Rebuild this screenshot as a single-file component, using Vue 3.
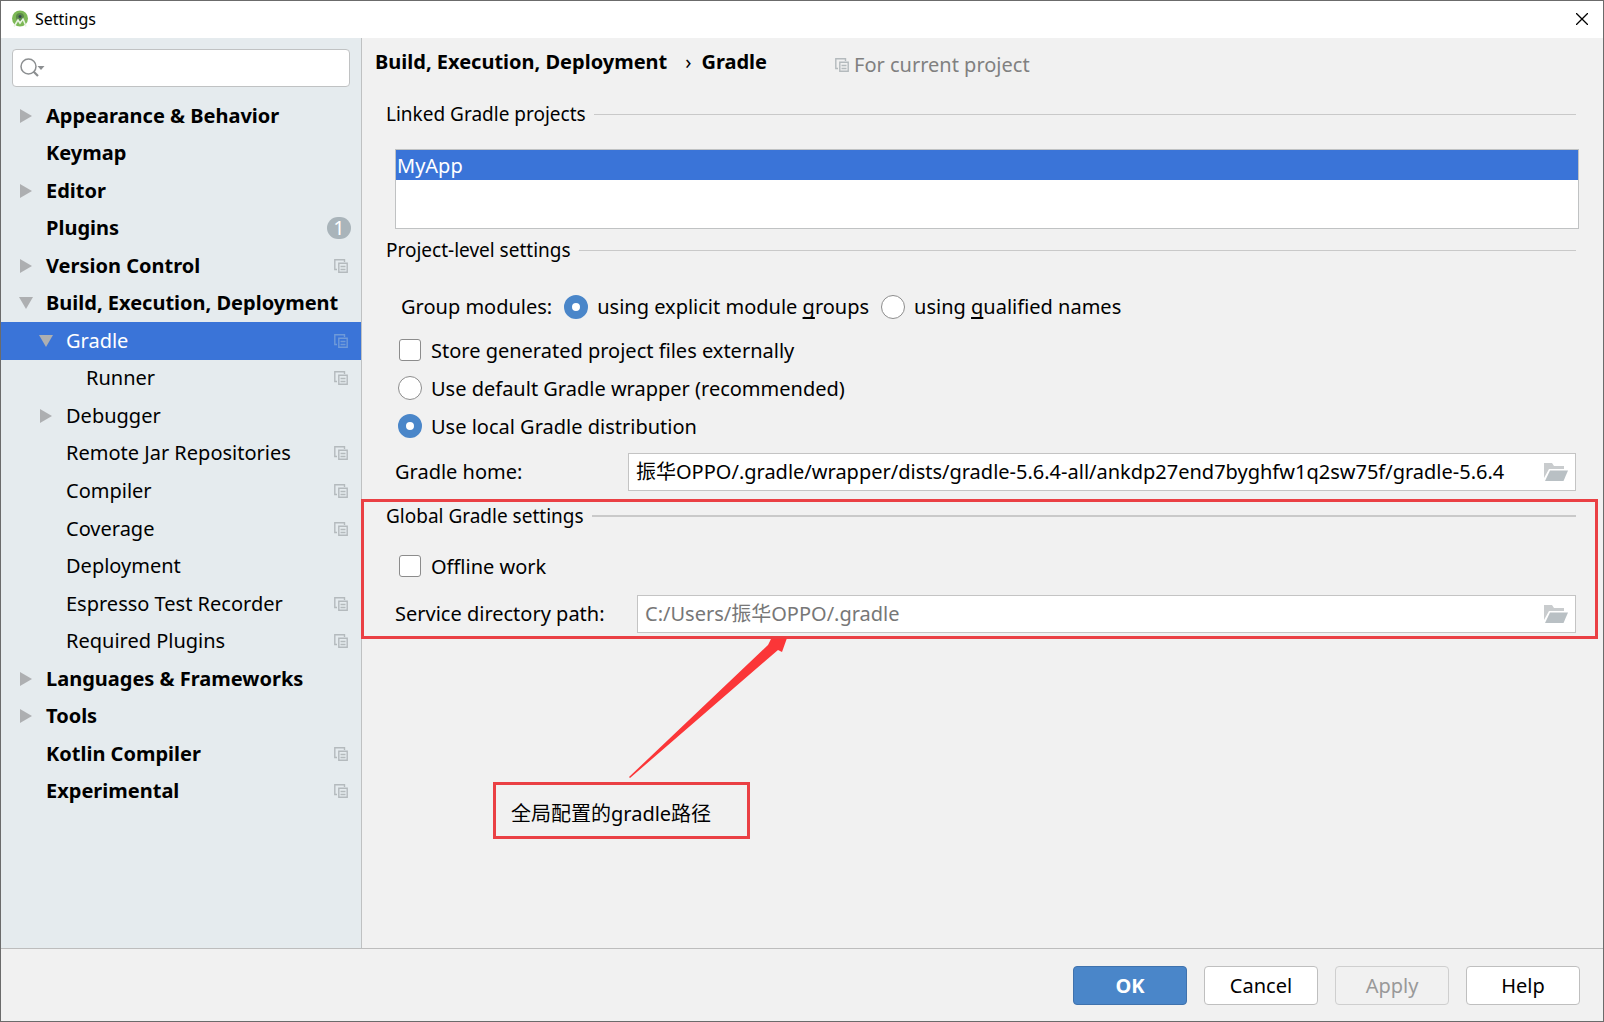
<script setup>
import { ref } from 'vue'

const tree = [
  { label: 'Appearance & Behavior', level: 0, arrow: 'right' },
  { label: 'Keymap', level: 0 },
  { label: 'Editor', level: 0, arrow: 'right' },
  { label: 'Plugins', level: 0, badge: 1 },
  { label: 'Version Control', level: 0, arrow: 'right', copy: true },
  { label: 'Build, Execution, Deployment', level: 0, arrow: 'down' },
  { label: 'Gradle', level: 1, arrow: 'down', copy: true },
  { label: 'Runner', level: 2, copy: true },
  { label: 'Debugger', level: 1, arrow: 'right' },
  { label: 'Remote Jar Repositories', level: 1, copy: true },
  { label: 'Compiler', level: 1, copy: true },
  { label: 'Coverage', level: 1, copy: true },
  { label: 'Deployment', level: 1 },
  { label: 'Espresso Test Recorder', level: 1, copy: true },
  { label: 'Required Plugins', level: 1, copy: true },
  { label: 'Languages & Frameworks', level: 0, arrow: 'right' },
  { label: 'Tools', level: 0, arrow: 'right' },
  { label: 'Kotlin Compiler', level: 0, copy: true },
  { label: 'Experimental', level: 0, copy: true }
]

const selected = ref('Gradle')
const search = ref('')
const grouping = ref('explicit')
const distribution = ref('local')
const storeExternally = ref(false)
const offline = ref(false)
const gradleHome = ref('振华OPPO/.gradle/wrapper/dists/gradle-5.6.4-all/ankdp27end7byghfw1q2sw75f/gradle-5.6.4')
const servicePath = ref('')
</script>

<template>
  <div class="window">
    <svg class="defs" aria-hidden="true">
      <symbol id="copy" viewBox="0 0 14 14">
        <path d="M3 10.5H.8V.8h9.700V3M4.800 4.300h8.400v8.900H4.800zM6.500 7.500h5M6.500 10.500h5" fill="none" stroke="currentColor" stroke-width="1.400" />
      </symbol>
      <symbol id="folder" viewBox="0 0 24 18">
        <path d="M0 0h8l2 3h10v3H5L0 15z" fill="#c9ccce" />
        <path d="M6 7.500h18L19.500 18H1z" fill="#b9c0c4" />
      </symbol>
    </svg>

    <header class="titlebar">
      <svg class="logo" viewBox="0 0 18 18" aria-hidden="true">
        <circle cx="9" cy="8.500" r="8" fill="#7cb855" />
        <circle cx="9" cy="7" r="4" fill="#5b8a49" />
        <circle cx="9" cy="6.500" r="1.500" fill="#37474f" />
        <path d="M3 16.500L7 10l2 3 3-4 3 7.500" fill="none" stroke="#e8f2e2" stroke-width="1.600" />
      </svg>
      <span class="title">Settings</span>
      <button class="close" aria-label="Close">
        <svg viewBox="0 0 12 12"><path d="M0 0l12 12M12 0L0 12" stroke="#000" stroke-width="1.300" /></svg>
      </button>
    </header>

    <div class="body">
      <nav class="sidebar">
        <label class="search">
          <svg viewBox="0 0 26 20" aria-hidden="true">
            <circle cx="8.500" cy="8.500" r="7.500" fill="none" stroke="#8c8f91" stroke-width="1.500" />
            <path d="M13.500 13.500l4.500 4.500" stroke="#8c8f91" stroke-width="2.200" />
            <path d="M17.500 8h7l-3.500 4z" fill="#8c8f91" />
          </svg>
          <input v-model="search" type="text" aria-label="Search settings" />
        </label>
        <ul class="tree">
          <li v-for="item in tree" :key="item.label">
            <button
              class="node"
              :class="['level-' + item.level, { selected: item.label === selected }]"
              @click="selected = item.label"
            >
              <span class="arrow">
                <svg v-if="item.arrow === 'right'" viewBox="0 0 14 14"><path d="M1 0v14l12-7z" fill="#adafb1" /></svg>
                <svg v-if="item.arrow === 'down'" viewBox="0 0 14 14"><path d="M0 1h14L7 13z" fill="#adafb1" /></svg>
              </span>
              <span class="label">{{ item.label }}</span>
              <svg v-if="item.copy" class="copy"><use href="#copy" /></svg>
              <span v-if="item.badge" class="badge">{{ item.badge }}</span>
            </button>
          </li>
        </ul>
      </nav>

      <main class="content">
        <div class="heading">
          <h1><span>Build, Execution, Deployment</span><span class="sep">›</span><span>Gradle</span></h1>
          <p class="scope"><svg class="copy"><use href="#copy" /></svg>For current project</p>
        </div>

        <section>
          <h2>Linked Gradle projects</h2>
          <ul class="projects">
            <li>MyApp</li>
          </ul>
        </section>

        <section class="project-level">
          <h2>Project-level settings</h2>
          <div class="group-row">
            <span>Group modules:</span>
            <label><input v-model="grouping" type="radio" name="grouping" value="explicit" /><span>using explicit module <u>g</u>roups</span></label>
            <label><input v-model="grouping" type="radio" name="grouping" value="qualified" /><span>using <u>q</u>ualified names</span></label>
          </div>
          <label class="option"><input v-model="storeExternally" type="checkbox" /><span>Store generated project files externally</span></label>
          <label class="option"><input v-model="distribution" type="radio" name="distribution" value="wrapper" /><span>Use default Gradle wrapper (recommended)</span></label>
          <label class="option"><input v-model="distribution" type="radio" name="distribution" value="local" /><span>Use local Gradle distribution</span></label>
          <div class="field home">
            <label for="home">Gradle home:</label>
            <div class="box">
              <input id="home" v-model="gradleHome" type="text" />
              <button class="browse" aria-label="Browse"><svg><use href="#folder" /></svg></button>
            </div>
          </div>
        </section>

        <section class="global">
          <h2>Global Gradle settings</h2>
          <label class="option"><input v-model="offline" type="checkbox" /><span>Offline work</span></label>
          <div class="field service">
            <label for="service">Service directory path:</label>
            <div class="box">
              <input id="service" v-model="servicePath" type="text" placeholder="C:/Users/振华OPPO/.gradle" />
              <button class="browse" aria-label="Browse"><svg><use href="#folder" /></svg></button>
            </div>
          </div>
          <div class="frame"></div>
          <svg class="pointer" viewBox="0 0 160 140" aria-hidden="true">
            <path d="M0 139L139 7L142 1L158 0L153 14L149 12L1 140z" fill="#fb3638" />
          </svg>
          <div class="note">全局配置的gradle路径</div>
        </section>
      </main>
    </div>

    <footer class="footer">
      <button class="primary">OK</button>
      <button>Cancel</button>
      <button disabled>Apply</button>
      <button>Help</button>
    </footer>
  </div>
</template>

<style>
body {
  margin: 0;
}
</style>

<style scoped>
* {
  box-sizing: border-box;
}
.window {
  display: flex;
  flex-direction: column;
  min-height: 100vh;
  border: 1px solid #6b6b6b;
  background: #f1f1f1;
  color: #000;
  font: 20px/28px "Noto Sans", "Noto Sans CJK SC", sans-serif;
}
.defs {
  display: none;
}
button,
input {
  margin: 0;
  padding: 0;
  border: 0;
  background: none;
  color: inherit;
  font: inherit;
}
h1,
h2,
p,
ul {
  margin: 0;
  padding: 0;
  list-style: none;
}
.titlebar {
  display: flex;
  align-items: center;
  height: 37px;
  padding: 0 15px 2px 10px;
  background: #fff;
}
.logo {
  width: 18px;
  height: 18px;
}
.title {
  flex: 1;
  margin-left: 6px;
  font-size: 16px;
}
.close {
  display: flex;
}
.close svg {
  width: 12px;
  height: 12px;
}
.body {
  display: flex;
  flex: 1;
}
.sidebar {
  width: 361px;
  border-right: 1px solid #bfc1c2;
  background: #e5ebee;
}
.search {
  display: flex;
  align-items: center;
  height: 38px;
  margin: 11px 11px 10px;
  padding: 0 7px;
  border: 1px solid #c0c2c3;
  border-radius: 4px;
  background: #fff;
}
.search svg {
  width: 26px;
  height: 20px;
}
.search input {
  flex: 1;
  min-width: 0;
  outline: 0;
}
.tree {
  display: grid;
  grid-auto-rows: 1fr;
  height: 713px;
}
.tree li {
  display: flex;
}
.node {
  display: flex;
  flex: 1;
  align-items: center;
  padding-right: 13px;
  text-align: left;
  white-space: nowrap;
}
.level-0 {
  padding-left: 18px;
  font-weight: 700;
}
.level-1 {
  padding-left: 38px;
}
.level-2 {
  padding-left: 58px;
}
.selected {
  background: #3a74d8;
  color: #fff;
}
.arrow {
  display: flex;
  width: 27px;
}
.arrow svg {
  width: 14px;
  height: 14px;
}
.label {
  flex: 1;
}
.copy {
  width: 14px;
  height: 14px;
  color: #b4babd;
}
.selected .copy {
  color: #6f9ad9;
}
.badge {
  width: 24px;
  height: 22px;
  margin-right: -3px;
  border-radius: 11px;
  background: #a9b4ba;
  color: #fff;
  font-weight: 400;
  line-height: 22px;
  text-align: center;
}
.content {
  flex: 1;
  min-width: 0;
  padding: 0 27px 0 24px;
}
.heading {
  display: flex;
  align-items: center;
  height: 48px;
  margin: 0 0 14px -11px;
}
h1 {
  font-size: 20px;
  font-weight: 700;
}
.sep {
  margin: 0 10px 0 18px;
  font-weight: 400;
}
.scope {
  display: flex;
  align-items: center;
  gap: 5px;
  margin: 6px 0 0 68px;
  color: #808080;
}
h2 {
  display: flex;
  align-items: center;
  gap: 8px;
  font-size: 19px;
  font-weight: 400;
}
h2::after {
  flex: 1;
  height: 1px;
  background: #c9c9c9;
  content: "";
}
.projects {
  height: 80px;
  margin: 21px -3px 0 9px;
  border: 1px solid #c0c2c3;
  background: #fff;
}
.projects li {
  padding: 2px 1px 0;
  background: #3a74d8;
  color: #fff;
}
.project-level {
  margin-top: 7px;
}
.group-row {
  display: flex;
  align-items: center;
  gap: 12px;
  height: 24px;
  margin: 31px 0 12px 15px;
}
.group-row label,
.option {
  display: flex;
  align-items: center;
  gap: 9px;
}
.option {
  height: 38px;
  margin-left: 12px;
}
.option span {
  padding-top: 2px;
}
u {
  text-underline-offset: 3px;
  text-decoration-skip-ink: none;
}
input[type="radio"],
input[type="checkbox"] {
  width: 24px;
  height: 24px;
  border: 1px solid #8c8c8c;
  border-radius: 50%;
  background: #fff;
  appearance: none;
}
input[type="checkbox"] {
  width: 22px;
  height: 22px;
  margin: 0 1px;
  border-radius: 3px;
}
input[type="radio"]:checked {
  border: 8px solid #4a86c9;
}
.field {
  display: flex;
  align-items: center;
  margin: 8px 0 0 9px;
}
.home > label {
  width: 233px;
}
.service > label {
  width: 242px;
}
.box {
  display: flex;
  flex: 1;
  align-items: center;
  height: 38px;
  padding: 0 7px;
  border: 1px solid #c4c4c4;
  background: #fff;
}
.box input {
  flex: 1;
  min-width: 0;
  outline: 0;
}
.box input::placeholder {
  color: #777;
  opacity: 1;
}
.browse {
  display: flex;
  margin-left: 8px;
}
.browse svg {
  width: 24px;
  height: 18px;
}
.global {
  position: relative;
  margin-top: 11px;
}
.global h2::after {
  height: 2px;
}
.global .option {
  margin-top: 17px;
}
.service {
  margin-top: 10px;
}
.frame {
  position: absolute;
  inset: -3px -22px -6px -25px;
  border: 3px solid #ea4044;
  pointer-events: none;
}
.pointer {
  position: absolute;
  top: 136px;
  left: 243px;
  width: 160px;
  height: 140px;
}
.note {
  position: absolute;
  top: 280px;
  left: 107px;
  width: 257px;
  padding: 15px 15px 8px;
  border: 3px solid #ea4044;
}
.footer {
  display: flex;
  justify-content: flex-end;
  gap: 17px;
  padding: 17px 23px 16px;
  border-top: 1px solid #bdbdbd;
}
.footer button {
  width: 114px;
  height: 39px;
  border: 1px solid #bfbfbf;
  border-radius: 4px;
  background: #fff;
}
.footer .primary {
  border-color: #3f72ad;
  background: #4a86c9;
  color: #fff;
  font-weight: 700;
}
.footer button:disabled {
  border-color: #cfcfcf;
  background: #f1f1f1;
  color: #999;
}
</style>
